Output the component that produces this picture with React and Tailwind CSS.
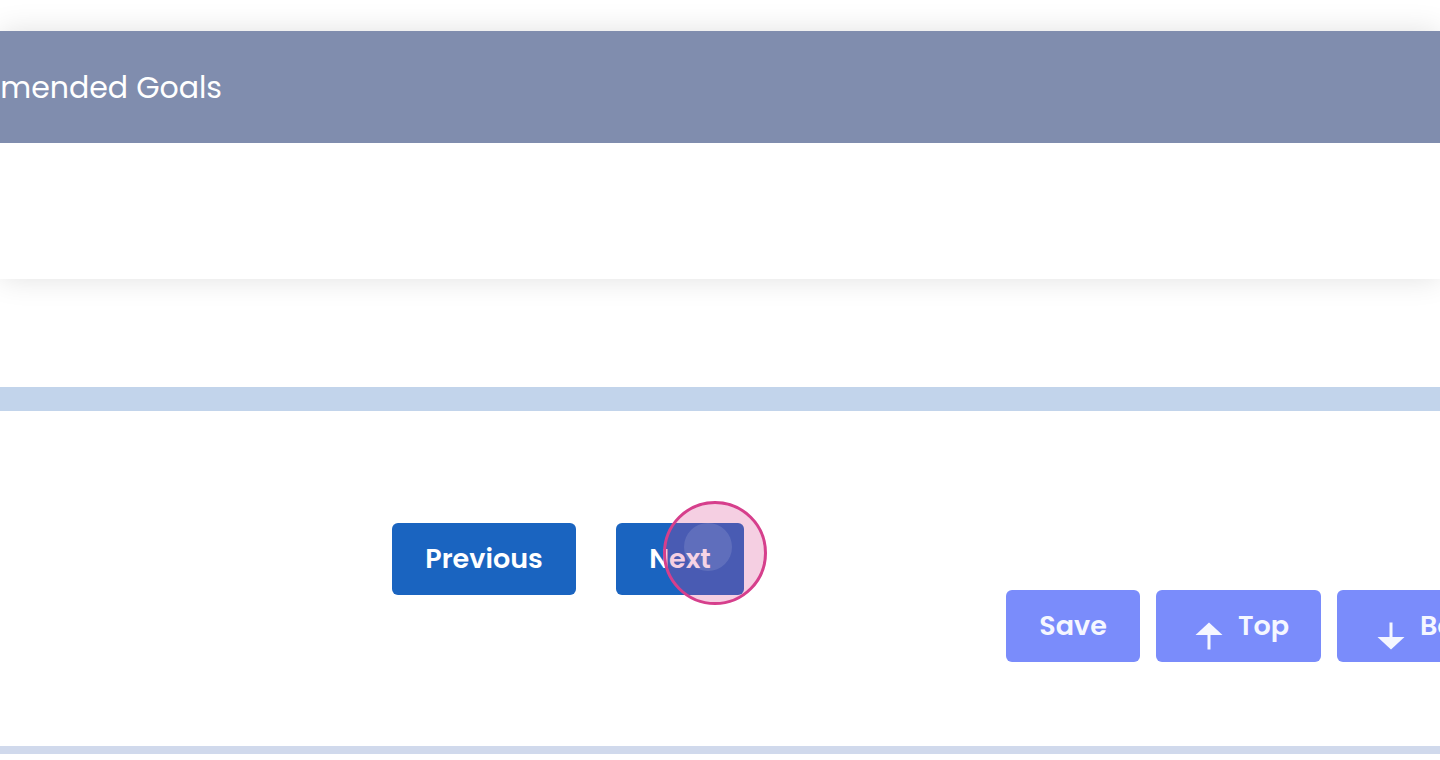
import React from 'react';

function ArrowUp() {
  return (
    <svg width="28" height="28" viewBox="0 0 28 28" className="mt-[19px] shrink-0">
      <path d="M0.5 13 L14 0.5 L27.5 13 Z" fill="#F5F7FF" />
      <rect x="12.5" y="12" width="3" height="15.5" fill="#F5F7FF" />
    </svg>
  );
}

function ArrowDown() {
  return (
    <svg width="28" height="28" viewBox="0 0 28 28" className="mt-[19px] shrink-0">
      <rect x="12.5" y="0.5" width="3" height="15.5" fill="#F5F7FF" />
      <path d="M0.5 15 L14 27.5 L27.5 15 Z" fill="#F5F7FF" />
    </svg>
  );
}

export default function App() {
  return (
    <div className="min-h-screen bg-white overflow-hidden font-['Poppins','Inter',sans-serif]">
      {/* Card */}
      <div className="pt-[31px]">
        <div className="bg-white shadow-[0_0_28px_rgba(0,0,0,0.12)]">
          <div className="h-[112px] bg-[#808DAE] flex items-center">
            <div className="w-[222px] overflow-hidden whitespace-nowrap flex justify-end text-[30px] text-white font-normal">
              Recommended Goals
            </div>
          </div>
          <div className="h-[136px]" />
        </div>
      </div>

      <div className="h-[108px]" />
      <div className="h-[24px] bg-[#C2D4EB]" />

      {/* Actions */}
      <div className="h-[335px] flex items-start pl-[392px] whitespace-nowrap">
        <button className="shrink-0 mt-[112px] w-[184px] h-[72px] rounded-md bg-[#1A64C0] text-white text-[27px] font-semibold">
          Previous
        </button>
        <div className="relative shrink-0 mt-[112px] ml-[40px]">
          <button className="w-[128px] h-[72px] rounded-md bg-[#1A64C0] text-white text-[27px] font-semibold">
            Next
          </button>
          <div className="absolute left-[47px] top-[-22px] w-[104px] h-[104px] rounded-full border-[3px] border-[#D63F8C] bg-[rgba(214,63,140,0.25)] pointer-events-none">
            <div className="ml-[18px] mt-[19px] w-[48px] h-[48px] rounded-full bg-[rgba(255,255,255,0.12)]" />
          </div>
        </div>

        <div className="flex gap-4 mt-[179px] ml-[262px] shrink-0">
          <button className="shrink-0 w-[134px] h-[72px] rounded-md bg-[#7A8CFB] text-[#F5F7FF] text-[27px] font-semibold">
            Save
          </button>
          <button className="shrink-0 w-[165px] h-[72px] rounded-md bg-[#7A8CFB] text-[#F5F7FF] text-[27px] font-semibold flex items-center pl-[39px] gap-[15px]">
            <ArrowUp />
            <span>Top</span>
          </button>
          <button className="shrink-0 w-[220px] h-[72px] rounded-md bg-[#7A8CFB] text-[#F5F7FF] text-[27px] font-semibold flex items-center pl-[40px] gap-[15px]">
            <ArrowDown />
            <span>Bottom</span>
          </button>
        </div>
      </div>

      <div className="h-[8px] bg-[#D0D9EC]" />
    </div>
  );
}
